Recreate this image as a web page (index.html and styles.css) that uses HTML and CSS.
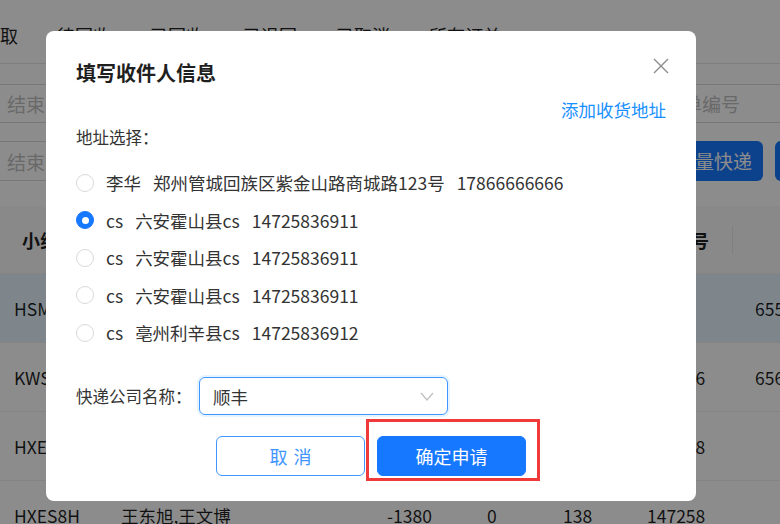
FILE: index.html
```html
<!DOCTYPE html>
<html lang="zh-CN">
<head>
<meta charset="utf-8">
<title>填写收件人信息</title>
<link rel="stylesheet" href="styles.css">
</head>
<body>
<div class="page">
  <div class="tabs">
    <span class="tab">取</span>
    <span class="tab">待回收</span>
    <span class="tab">已回收</span>
    <span class="tab">已退回</span>
    <span class="tab">已取消</span>
    <span class="tab">所有订单</span>
  </div>
  <div class="filter-row first">
    <div class="input left-input"><span class="ph">结束日期</span></div>
    <div class="input right-input"><span class="ph">请输入运单编号</span></div>
  </div>
  <div class="filter-row">
    <div class="input left-input"><span class="ph">结束日期</span></div>
    <div class="btns">
      <span class="bg-btn">批量快递</span>
      <span class="bg-btn wide">导出订单</span>
    </div>
  </div>
  <div class="table">
    <div class="tr head">
      <div class="th first">小组名称</div>
      <div class="th">成员</div>
      <div class="th">金额</div>
      <div class="th">状态</div>
      <div class="th">数量</div>
      <div class="th">运单号<span class="sep"></span></div>
      <div class="th"></div>
    </div>
    <div class="tr active">
      <div class="td">HSM8K2</div>
      <div class="td">李华</div>
      <div class="td">-20</div>
      <div class="td">0</div>
      <div class="td">60</div>
      <div class="td">0</div>
      <div class="td last">655821</div>
    </div>
    <div class="tr">
      <div class="td">KWS3P6</div>
      <div class="td">王东旭</div>
      <div class="td">-560</div>
      <div class="td">0</div>
      <div class="td">96</div>
      <div class="td">147256</div>
      <div class="td last">656732</div>
    </div>
    <div class="tr">
      <div class="td">HXE2M1</div>
      <div class="td">王文博</div>
      <div class="td">-980</div>
      <div class="td">0</div>
      <div class="td">112</div>
      <div class="td">147258</div>
      <div class="td last"></div>
    </div>
    <div class="tr">
      <div class="td">HXES8H</div>
      <div class="td">王东旭,王文博</div>
      <div class="td">-1380</div>
      <div class="td">0</div>
      <div class="td">138</div>
      <div class="td">147258</div>
      <div class="td last"></div>
    </div>
  </div>
</div>

<div class="mask"></div>

<div class="dialog">
  <h2 class="title">填写收件人信息</h2>
  <span class="close">
    <svg width="16" height="16" viewBox="0 0 16 16"><path d="M1 1L15 15M15 1L1 15" stroke="#8c8c8c" stroke-width="1.4" fill="none"/></svg>
  </span>
  <div class="link-row"><a class="link">添加收货地址</a></div>
  <div class="label">地址选择：</div>
  <div class="radio-list">
    <div class="radio-item"><span class="radio"></span><span class="part">李华</span><span class="part">郑州管城回族区紫金山路商城路123号</span><span>17866666666</span></div>
    <div class="radio-item"><span class="radio checked"></span><span class="part">cs</span><span class="part">六安霍山县cs</span><span>14725836911</span></div>
    <div class="radio-item"><span class="radio"></span><span class="part">cs</span><span class="part">六安霍山县cs</span><span>14725836911</span></div>
    <div class="radio-item"><span class="radio"></span><span class="part">cs</span><span class="part">六安霍山县cs</span><span>14725836911</span></div>
    <div class="radio-item"><span class="radio"></span><span class="part">cs</span><span class="part">亳州利辛县cs</span><span>14725836912</span></div>
  </div>
  <div class="form-row">
    <span class="label form-label">快递公司名称：</span>
    <div class="select">
      <span class="select-value">顺丰</span>
      <svg class="arrow" width="14" height="9" viewBox="0 0 14 9"><polyline points="1,1 7,8 13,1" stroke="#bfbfbf" stroke-width="1.2" fill="none"/></svg>
    </div>
  </div>
  <div class="actions">
    <button class="btn cancel"><span class="spaced">取消</span></button>
    <button class="btn primary">确定申请</button>
  </div>
  <div class="highlight"></div>
</div>
</body>
</html>
```
FILE: styles.css
```css
html, body {
  margin: 0;
  padding: 0;
  width: 780px;
  height: 524px;
  overflow: hidden;
  font-family: "Noto Sans CJK SC", "Noto Sans", sans-serif;
  color: rgba(0, 0, 0, 0.88);
  background: #fff;
}

.page {
  width: 780px;
  height: 524px;
  overflow: hidden;
}

/* background tabs */
.tabs {
  height: 64px;
  box-sizing: border-box;
  border-bottom: 1px solid #e6e6e6;
  display: flex;
  gap: 39px;
  padding-top: 22px;
  font-size: 18px;
  line-height: 26px;
  color: #1f1f1f;
}

.filter-row {
  display: flex;
  align-items: center;
  height: 40px;
  margin-top: 18px;
}
.filter-row.first {
  margin-top: 20px;
  height: 39px;
}

.input {
  height: 100%;
  box-sizing: border-box;
  border: 1px solid #d9d9d9;
  display: flex;
  align-items: center;
  padding-left: 16px;
  font-size: 19px;
}
.ph { color: #bfbfbf; white-space: nowrap; }

.left-input {
  width: 330px;
  margin-left: -10px;
  border-radius: 6px;
}
.right-input {
  margin-left: auto;
  width: 220px;
  flex: none;
  margin-right: -34px;
  padding-left: 12px;
  border-radius: 6px;
}

.btns {
  margin-left: auto;
  display: flex;
  gap: 12px;
  margin-right: -95px;
  height: 40px;
}
.bg-btn {
  background: #1677ff;
  color: #fff;
  border-radius: 6px;
  font-size: 19px;
  line-height: 40px;
  padding: 0 11px;
  white-space: nowrap;
}
.bg-btn.wide { padding: 0 12px; }

/* background table */
.table {
  margin-top: 25px;
  font-size: 17.5px;
}
.tr {
  display: grid;
  grid-template-columns: 107px 266px 100px 76px 84px 100px 200px;
  height: 69px;
  border-bottom: 1px solid #f0f0f0;
  box-sizing: border-box;
  align-items: center;
  width: 933px;
}
.tr.head {
  height: 68px;
  background: #fafafa;
  font-weight: 700;
  font-size: 18px;
}
.tr.active { background: #e6f4ff; }
.th {
  padding-left: 22px;
  display: flex;
  align-items: center;
  white-space: nowrap;
  color: #1f1f1f;
}
.th.first { padding-left: 22px; }
.sep {
  margin-left: auto;
  width: 1px;
  height: 28px;
  background: #e8e8e8;
}
.td {
  padding-left: 14px;
  white-space: nowrap;
}
.td.last { padding-left: 22px; }

/* modal mask */
.mask {
  position: fixed;
  inset: 0;
  background: rgba(0, 0, 0, 0.45);
}

/* dialog */
.dialog {
  position: fixed;
  left: 46px;
  top: 31px;
  width: 650px;
  height: 470px;
  box-sizing: border-box;
  padding: 28px 30px 25px;
  background: #fff;
  border-radius: 8px;
  color: #333;
}

.title {
  margin: 0;
  font-size: 20px;
  line-height: 28px;
  font-weight: 700;
  color: #1f1f1f;
}

.close {
  position: absolute;
  top: 27px;
  right: 27px;
  width: 16px;
  height: 16px;
  display: block;
}
.close svg { display: block; }

.link-row {
  margin-top: 10px;
  text-align: right;
  line-height: 26px;
  font-size: 17.5px;
}
.link { color: #1890ff; cursor: pointer; }

.label {
  font-size: 16.5px;
  line-height: 26px;
  color: #333;
  margin-top: 1px;
}

.radio-list {
  margin-top: 14px;
}
.radio-item {
  height: 37.5px;
  display: flex;
  align-items: center;
  font-size: 17.5px;
  color: #333;
  white-space: nowrap;
}
.radio {
  width: 18px;
  height: 18px;
  box-sizing: border-box;
  border: 1px solid #d9d9d9;
  border-radius: 50%;
  margin-right: 12px;
  flex: none;
  display: flex;
  align-items: center;
  justify-content: center;
}
.radio.checked {
  background: #1677ff;
  border-color: #1677ff;
}
.radio.checked::after {
  content: "";
  width: 7px;
  height: 7px;
  border-radius: 50%;
  background: #fff;
}
.part { margin-right: 12px; }

.form-row {
  margin-top: 25.5px;
  display: flex;
  align-items: center;
}
.form-label {
  width: 123px;
  margin-top: 0;
  flex: none;
}
.select {
  width: 249px;
  height: 38px;
  box-sizing: border-box;
  border: 1px solid #4096ff;
  border-radius: 6px;
  box-shadow: 0 0 0 2px rgba(5, 145, 255, 0.1);
  display: flex;
  align-items: center;
  justify-content: space-between;
  padding: 0 13px 0 13px;
  font-size: 17.5px;
  color: #333;
}
.arrow { display: block; }

.actions {
  margin-top: 21px;
  display: flex;
  justify-content: center;
  gap: 12px;
}
.btn {
  width: 149px;
  height: 40px;
  box-sizing: border-box;
  border-radius: 6px;
  font-family: inherit;
  font-size: 18px;
  padding: 0;
  cursor: pointer;
}
.btn.cancel {
  background: #fff;
  border: 1px solid #4096ff;
  color: #4096ff;
}
.spaced {
  letter-spacing: 0.34em;
  margin-right: -0.34em;
}
.btn.primary {
  background: #1677ff;
  border: 1px solid #1677ff;
  color: #fff;
}

.highlight {
  position: absolute;
  left: 320px;
  top: 388px;
  width: 174px;
  height: 62px;
  box-sizing: border-box;
  border: 3px solid #f03a3a;
  pointer-events: none;
}
```
